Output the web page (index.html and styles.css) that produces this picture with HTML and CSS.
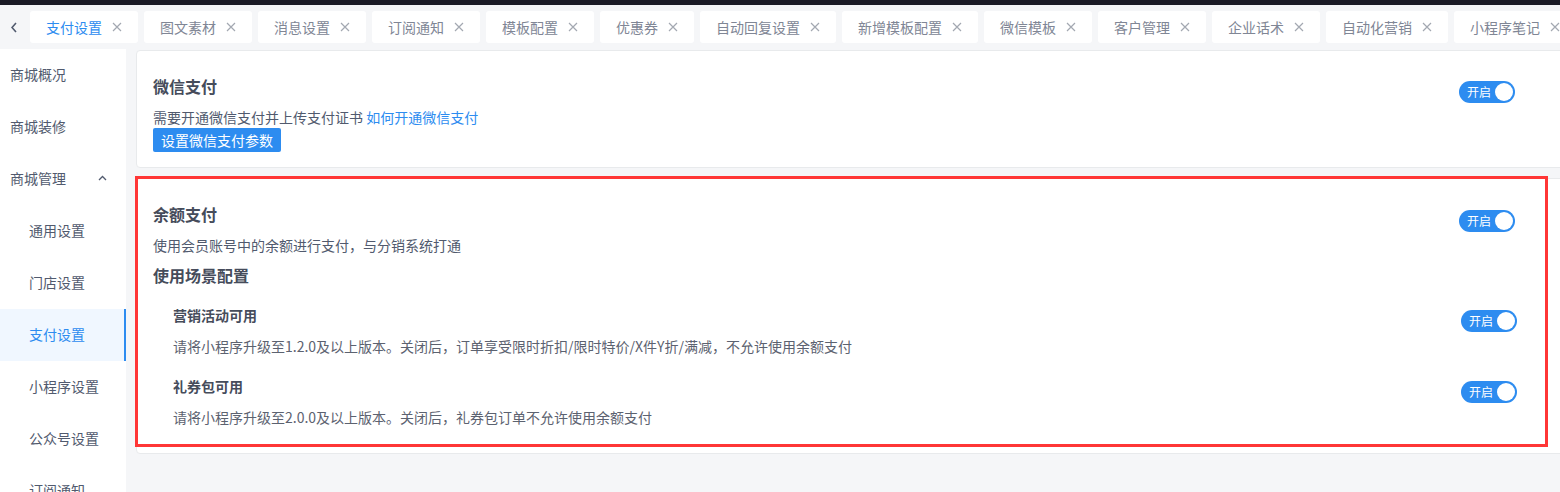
FILE: index.html
```html
<!DOCTYPE html>
<html lang="zh-CN">
<head>
<meta charset="utf-8">
<title>支付设置</title>
<link rel="stylesheet" href="styles.css">
</head>
<body>
<div class="topbar"></div>
<div class="tabbar">
  <div class="tab-prev">
    <svg width="6" height="11" viewBox="0 0 6 11"><path d="M5 1 L1 5.5 L5 10" fill="none" stroke="#515a6e" stroke-width="1.6"/></svg>
  </div>
  <div class="tabs">
    <div class="tab active"><span>支付设置</span><svg class="x" viewBox="0 0 10 10"><path d="M1 1 L9 9 M9 1 L1 9"/></svg></div>
    <div class="tab"><span>图文素材</span><svg class="x" viewBox="0 0 10 10"><path d="M1 1 L9 9 M9 1 L1 9"/></svg></div>
    <div class="tab"><span>消息设置</span><svg class="x" viewBox="0 0 10 10"><path d="M1 1 L9 9 M9 1 L1 9"/></svg></div>
    <div class="tab"><span>订阅通知</span><svg class="x" viewBox="0 0 10 10"><path d="M1 1 L9 9 M9 1 L1 9"/></svg></div>
    <div class="tab"><span>模板配置</span><svg class="x" viewBox="0 0 10 10"><path d="M1 1 L9 9 M9 1 L1 9"/></svg></div>
    <div class="tab"><span>优惠券</span><svg class="x" viewBox="0 0 10 10"><path d="M1 1 L9 9 M9 1 L1 9"/></svg></div>
    <div class="tab"><span>自动回复设置</span><svg class="x" viewBox="0 0 10 10"><path d="M1 1 L9 9 M9 1 L1 9"/></svg></div>
    <div class="tab"><span>新增模板配置</span><svg class="x" viewBox="0 0 10 10"><path d="M1 1 L9 9 M9 1 L1 9"/></svg></div>
    <div class="tab"><span>微信模板</span><svg class="x" viewBox="0 0 10 10"><path d="M1 1 L9 9 M9 1 L1 9"/></svg></div>
    <div class="tab"><span>客户管理</span><svg class="x" viewBox="0 0 10 10"><path d="M1 1 L9 9 M9 1 L1 9"/></svg></div>
    <div class="tab"><span>企业话术</span><svg class="x" viewBox="0 0 10 10"><path d="M1 1 L9 9 M9 1 L1 9"/></svg></div>
    <div class="tab"><span>自动化营销</span><svg class="x" viewBox="0 0 10 10"><path d="M1 1 L9 9 M9 1 L1 9"/></svg></div>
    <div class="tab"><span>小程序笔记</span><svg class="x" viewBox="0 0 10 10"><path d="M1 1 L9 9 M9 1 L1 9"/></svg></div>
  </div>
</div>
<div class="layout">
  <aside class="sidebar">
    <div class="nav-item">商城概况</div>
    <div class="nav-item">商城装修</div>
    <div class="nav-item group"><span>商城管理</span><svg class="caret" width="9" height="6" viewBox="0 0 9 6"><path d="M1 5 L4.5 1.5 L8 5" fill="none" stroke="#515a6e" stroke-width="1.3"/></svg></div>
    <div class="nav-item sub">通用设置</div>
    <div class="nav-item sub">门店设置</div>
    <div class="nav-item sub active">支付设置</div>
    <div class="nav-item sub">小程序设置</div>
    <div class="nav-item sub">公众号设置</div>
    <div class="nav-item sub">订阅通知</div>
  </aside>
  <main class="main">
    <section class="card">
      <div class="row">
        <div class="info">
          <h2 class="title">微信支付</h2>
          <p class="desc">需要开通微信支付并上传支付证书 <a class="link">如何开通微信支付</a></p>
          <span class="btn">设置微信支付参数</span>
        </div>
        <div class="switch">开启</div>
      </div>
    </section>
    <section class="card balance">
      <div class="row">
        <div class="info">
          <h2 class="title">余额支付</h2>
          <p class="desc">使用会员账号中的余额进行支付，与分销系统打通</p>
        </div>
        <div class="switch second">开启</div>
      </div>
      <h3 class="scene">使用场景配置</h3>
      <div class="sub-row">
        <div class="info">
          <h4 class="sub-title">营销活动可用</h4>
          <p class="sub-desc">请将小程序升级至1.2.0及以上版本。关闭后，订单享受限时折扣/限时特价/X件Y折/满减，不允许使用余额支付</p>
        </div>
        <div class="switch sub-switch">开启</div>
      </div>
      <div class="sub-row next">
        <div class="info">
          <h4 class="sub-title">礼券包可用</h4>
          <p class="sub-desc">请将小程序升级至2.0.0及以上版本。关闭后，礼券包订单不允许使用余额支付</p>
        </div>
        <div class="switch sub-switch">开启</div>
      </div>
      <div class="annot"></div>
    </section>
  </main>
</div>
</body>
</html>
```
FILE: styles.css
```css
* { box-sizing: border-box; }
html, body {
  margin: 0;
  padding: 0;
}
body {
  width: 1560px;
  height: 492px;
  overflow: hidden;
  background: #f5f6f8;
  font-family: "Noto Sans CJK SC", "Liberation Sans", sans-serif;
  color: #515a6e;
}
h2, h3, h4, p { margin: 0; }

.topbar {
  height: 5px;
  background: #1b1b26;
}
.tabbar {
  height: 44px;
  display: flex;
  align-items: flex-start;
}
.tab-prev {
  flex: none;
  width: 30px;
  height: 32px;
  margin-top: 6px;
  display: flex;
  align-items: center;
  justify-content: center;
  padding-right: 2px;
}
.tabs {
  flex: 1;
  display: flex;
  gap: 6px;
  margin-top: 6px;
  overflow: hidden;
}
.tab {
  flex: none;
  height: 32px;
  display: flex;
  align-items: center;
  gap: 10px;
  padding: 0 16px 1px;
  background: #fff;
  border-radius: 3px;
  font-size: 14px;
  line-height: 20px;
  color: #808695;
}
.tab.active { color: #2d8cf0; }
.tab .x {
  width: 10px;
  height: 10px;
  fill: none;
  stroke: #a3a8b1;
  stroke-width: 1.2;
}

.layout {
  display: flex;
  height: 443px;
}
.sidebar {
  flex: none;
  width: 126px;
  background: #fff;
  overflow: hidden;
}
.nav-item {
  height: 52px;
  display: flex;
  align-items: center;
  padding-left: 10px;
  padding-bottom: 3px;
  font-size: 14px;
  color: #515a6e;
}
.nav-item.sub { padding-left: 29px; }
.nav-item.group .caret {
  margin-left: auto;
  margin-right: 19px;
}
.nav-item.active {
  background: #f0f7ff;
  color: #2d8cf0;
  box-shadow: inset -2px 0 0 #2d8cf0;
}

.main {
  flex: none;
  width: 1454px;
  padding: 1px 0 0 10px;
}
.card {
  width: 1444px;
  background: #fff;
  border: 1px solid #e8eaec;
  border-radius: 4px;
  padding: 23px 64px 15px 16px;
}
.card.balance {
  position: relative;
  margin-top: 10px;
  padding-bottom: 26px;
}
.row, .sub-row {
  display: flex;
  align-items: flex-start;
}
.info { flex: 1; }
.title {
  font-size: 16px;
  line-height: 24px;
  font-weight: 700;
  color: #464c5b;
  margin-bottom: 9px;
}
.desc {
  font-size: 14px;
  line-height: 20px;
  color: #515a6e;
}
.link { color: #2d8cf0; }
.btn {
  display: inline-block;
  height: 24px;
  line-height: 24px;
  padding: 0 8px;
  background: #2d8cf0;
  color: #fff;
  font-size: 14px;
  border-radius: 2px;
}
.switch {
  flex: none;
  position: relative;
  width: 56px;
  height: 22px;
  margin-top: 7px;
  border-radius: 11px;
  background: #2d8cf0;
  color: #fff;
  font-size: 12px;
  line-height: 22px;
  padding-left: 8px;
}
.switch::after {
  content: "";
  position: absolute;
  right: 2px;
  top: 2px;
  width: 18px;
  height: 18px;
  border-radius: 50%;
  background: #fff;
}
.switch.second { margin-top: 8px; }
.scene {
  margin-top: 8px;
  font-size: 16px;
  line-height: 24px;
  font-weight: 700;
  color: #464c5b;
}
.sub-row {
  margin-top: 18px;
  padding-left: 20px;
  margin-right: -2px;
}
.sub-row.next { margin-top: 20px; }
.sub-title {
  font-size: 14px;
  line-height: 20px;
  font-weight: 700;
  color: #464c5b;
  margin-bottom: 11px;
}
.sub-desc {
  font-size: 14px;
  line-height: 20px;
  color: #5c6270;
}
.sub-switch { margin-top: 5px; }

.annot {
  position: absolute;
  left: -2px;
  top: -3px;
  width: 1413px;
  height: 271px;
  border: 3px solid #ff3636;
  pointer-events: none;
}
```
